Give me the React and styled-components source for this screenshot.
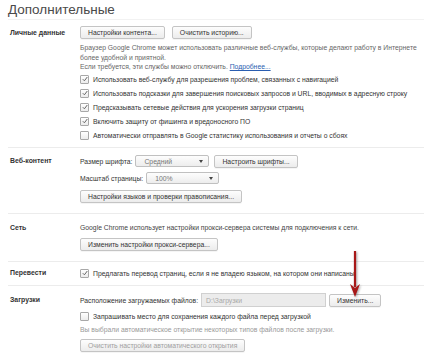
import styled, { createGlobalStyle } from "styled-components";

const Global = createGlobalStyle`
  body {
    margin: 0;
    background: #fff;
    font-family: "Liberation Sans", Arial, sans-serif;
    color: #333;
  }
`;

const Page = styled.div`
  position: relative;
  width: 424px;
  height: 357px;
  overflow: hidden;
  padding-left: 8px;
  box-sizing: border-box;
`;

const Title = styled.h1`
  margin: 0;
  height: 20px;
  padding-top: 3px;
  box-sizing: border-box;
  font-size: 13.5px;
  font-weight: normal;
  color: #4a4a4a;
  line-height: 14px;
  border-bottom: 1px solid #f2f2f2;
`;

const Section = styled.section`
  display: flex;
  padding: ${(p) => p.$pad || "6px 0 4px"};
  border-top: ${(p) => (p.$first ? "none" : "1px solid #ececec")};
`;

const Label = styled.div`
  width: 70px;
  flex: none;
  padding-left: 2px;
  font-size: 6.9px;
  font-weight: bold;
  color: #333;
  line-height: ${(p) => p.$h}px;
`;

const Content = styled.div`
  display: flex;
  flex-direction: column;
  align-items: flex-start;
  gap: ${(p) => p.$gap || 0}px;
`;

const Row = styled.div`
  display: flex;
  align-items: center;
  gap: ${(p) => p.$gap || 4}px;
  height: ${(p) => p.$h || 14}px;
  font-size: 6.8px;
  color: #333;
  white-space: nowrap;
`;

const Button = styled.button`
  height: 13px;
  padding: 0 7px;
  border: 1px solid #c4c4c4;
  border-radius: 2px;
  background: linear-gradient(#fdfdfd, #ececec);
  font-family: inherit;
  font-size: 6.8px;
  color: ${(p) => (p.disabled ? "#a0a0a0" : "#333")};
  line-height: 11px;
  white-space: nowrap;
  box-shadow: 0 1px 0 rgba(0, 0, 0, 0.04);
`;

const Text = styled.div`
  font-size: 6.8px;
  line-height: ${(p) => p.$lh || 9.7}px;
  color: ${(p) => p.$color || "#666"};
  white-space: nowrap;
`;

const Link = styled.a`
  color: #2a5db0;
  text-decoration: underline;
`;

const Box = styled.span`
  width: 7px;
  height: 7px;
  flex: none;
  border: 1px solid #a8a8a8;
  border-radius: 1px;
  background: linear-gradient(#fff, #ececec);
  display: flex;
  align-items: center;
  justify-content: center;
`;

const Select = styled.div`
  width: ${(p) => p.$w}px;
  height: 12px;
  box-sizing: border-box;
  border: 1px solid #c0c0c0;
  border-radius: 2px;
  background: linear-gradient(#fdfdfd, #ededed);
  display: flex;
  align-items: center;
  justify-content: space-between;
  padding: 0 5px 0 8px;
  font-size: 6.8px;
  color: #777;
`;

const Caret = styled.span`
  width: 0;
  height: 0;
  border-left: 2.5px solid transparent;
  border-right: 2.5px solid transparent;
  border-top: 3px solid #444;
`;

const Field = styled.div`
  width: 125px;
  height: 14px;
  box-sizing: border-box;
  border: 1px solid #d0d0d0;
  background: #ececec;
  font-size: 6.8px;
  color: #a8a8a8;
  display: flex;
  align-items: center;
  padding-left: 4px;
`;

const Arrow = styled.svg`
  position: absolute;
  left: 348px;
  top: 251px;
  filter: drop-shadow(1px 1px 1px rgba(0, 0, 0, 0.35));
`;

function Check({ on }) {
  return (
    <Box>
      {on && (
        <svg width="6" height="6" viewBox="0 0 6 6">
          <path d="M0.8 3.2 L2.4 4.8 L5.3 1" fill="none" stroke="#666" strokeWidth="1" />
        </svg>
      )}
    </Box>
  );
}

function CheckRow({ on, children, style }) {
  return (
    <Row style={style}>
      <Check on={on} />
      <span>{children}</span>
    </Row>
  );
}

export default function App() {
  return (
    <Page>
      <Global />
      <Title>Дополнительные</Title>

      <Section $first $pad="6px 0 5px">
        <Label $h={13}>Личные данные</Label>
        <Content>
          <Row $h={13} $gap={7}>
            <Button>Настройки контента...</Button>
            <Button>Очистить историю...</Button>
          </Row>
          <Text style={{ marginTop: 4 }}>
            Браузер Google Chrome может использовать различные веб-службы, которые делают работу в Интернете
            <br />
            более удобной и приятной.
            <br />
            Если требуется, эти службы можно отключить. <Link>Подробнее...</Link>
          </Text>
          <CheckRow on>Использовать веб-службу для разрешения проблем, связанных с навигацией</CheckRow>
          <CheckRow on>Использовать подсказки для завершения поисковых запросов и URL, вводимых в адресную строку</CheckRow>
          <CheckRow on>Предсказывать сетевые действия для ускорения загрузки страниц</CheckRow>
          <CheckRow on>Включить защиту от фишинга и вредоносного ПО</CheckRow>
          <CheckRow>Автоматически отправлять в Google статистику использования и отчеты о сбоях</CheckRow>
        </Content>
      </Section>

      <Section $pad="7px 0 10px">
        <Label $h={12}>Веб-контент</Label>
        <Content $gap={5}>
          <Row $h={12} $gap={3}>
            <span>Размер шрифта:</span>
            <Select $w={74}>
              Средний <Caret />
            </Select>
            <Button style={{ marginLeft: 2 }}>Настроить шрифты...</Button>
          </Row>
          <Row $h={12} $gap={3}>
            <span>Масштаб страницы:</span>
            <Select $w={73}>
              100% <Caret />
            </Select>
          </Row>
          <Button style={{ marginTop: 1 }}>Настройки языков и проверки правописания...</Button>
        </Content>
      </Section>

      <Section $pad="9px 0 10px">
        <Label $h={10}>Сеть</Label>
        <Content $gap={5}>
          <Text $lh={10} $color="#444">
            Google Chrome использует настройки прокси-сервера системы для подключения к сети.
          </Text>
          <Button>Изменить настройки прокси-сервера...</Button>
        </Content>
      </Section>

      <Section $pad="4px 0 5px">
        <Label $h={14}>Перевести</Label>
        <Content>
          <CheckRow on>Предлагать перевод страниц, если я не владею языком, на котором они написаны</CheckRow>
        </Content>
      </Section>

      <Section $pad="7px 0 6px">
        <Label $h={14}>Загрузки</Label>
        <Content>
          <Row $gap={3}>
            <span>Расположение загружаемых файлов:</span>
            <Field>D:\Загрузки</Field>
            <Button>Изменить...</Button>
          </Row>
          <CheckRow style={{ marginTop: 2 }}>
            Запрашивать место для сохранения каждого файла перед загрузкой
          </CheckRow>
          <Text $lh={10} $color="#999" style={{ marginTop: 2 }}>
            Вы выбрали автоматическое открытие некоторых типов файлов после загрузки.
          </Text>
          <Button disabled style={{ marginTop: 4 }}>
            Очистить настройки автоматического открытия
          </Button>
        </Content>
      </Section>

      <Arrow width="16" height="50" viewBox="0 0 16 50">
        <path d="M7 0 L7 36" stroke="#a81818" strokeWidth="2.2" />
        <path d="M2 33 L7 46 L12 33 L7 37 Z" fill="#a81818" />
      </Arrow>
    </Page>
  );
}
